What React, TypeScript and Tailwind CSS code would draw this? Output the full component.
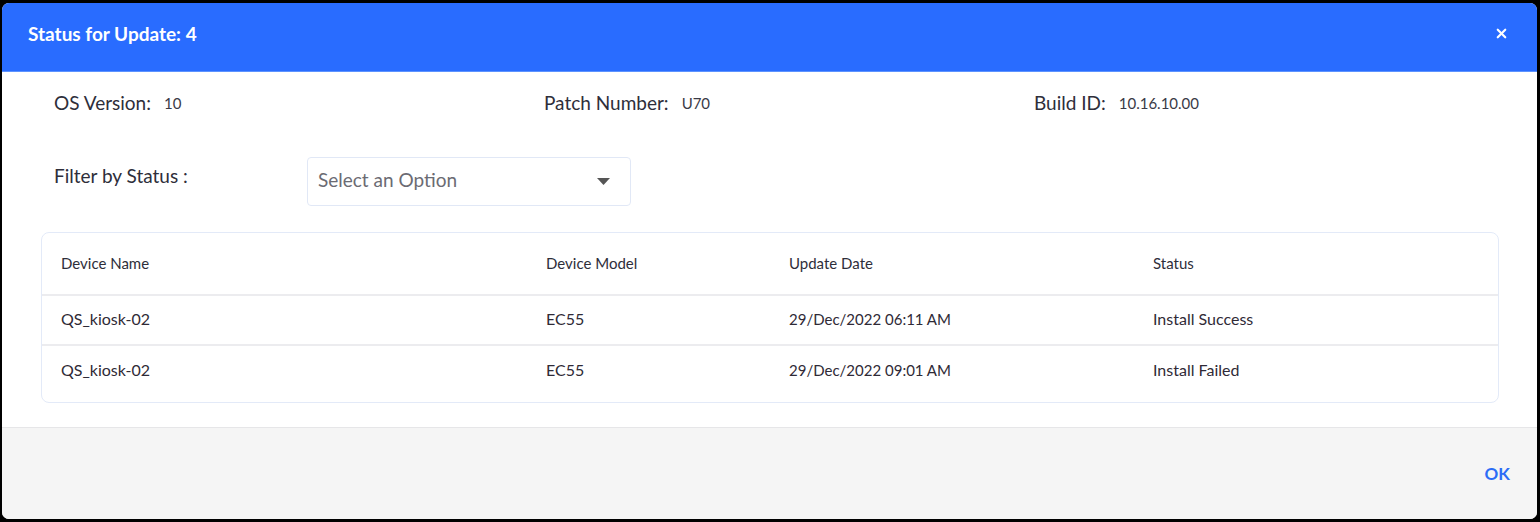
import { X } from "lucide-react";

type Row = { name: string; model: string; date: string; status: string };

const rows: Row[] = [
  { name: "QS_kiosk-02", model: "EC55", date: "29/Dec/2022 06:11 AM", status: "Install Success" },
  { name: "QS_kiosk-02", model: "EC55", date: "29/Dec/2022 09:01 AM", status: "Install Failed" },
];

const cols = "grid grid-cols-[485px_243px_364px_1fr] pl-[19px] pr-[20px]";

function Info({ label, value }: { label: string; value: string }) {
  return (
    <div className="flex items-center">
      <span className="text-[19px] text-[#2e2e3a]">{label}</span>
      <span className="ml-[13px] text-[15px] text-[#3a3a46]">{value}</span>
    </div>
  );
}

export default function App() {
  return (
    <div
      className="h-[522px] w-[1540px] bg-black pl-[2px] pt-[3px]"
      style={{ fontFamily: "Lato, 'Noto Sans', sans-serif" }}
    >
      <div className="flex h-[516px] w-[1535px] flex-col overflow-hidden rounded-[7px] bg-white">
        {/* header */}
        <div className="flex h-[69px] shrink-0 items-center justify-between border-b border-[#5d93ff] bg-[#296cff] pb-[5px] pl-[26px] pr-[28px]">
          <h2 className="text-[19px] font-bold text-white">Status for Update: 4</h2>
          <X className="mb-[3px] h-[15px] w-[15px] text-white" strokeWidth={3.5} />
        </div>

        {/* body */}
        <div className="flex-1 pl-[39px] pr-[38px] pt-[17px]">
          <div className="grid h-[22px] grid-cols-[490px_490px_1fr] pl-[13px]">
            <Info label="OS Version:" value="10" />
            <Info label="Patch Number:" value="U70" />
            <Info label="Build ID:" value="10.16.10.00" />
          </div>

          <div className="mt-[46px] flex items-start pl-[13px]">
            <span className="mt-[8px] w-[253px] text-[19px] leading-[22px] text-[#2e2e3a]">
              Filter by Status :
            </span>
            <div className="flex h-[49px] w-[324px] items-center justify-between rounded-[4px] border border-[#e1e8f6] pb-[3px] pl-[10px] pr-[20px]">
              <span className="text-[19px] text-[#6b6b73]">Select an Option</span>
              <svg width="13" height="7" viewBox="0 0 13 7" className="mt-[2px]">
                <path d="M0 0 H13 L6.5 7 Z" fill="#555" />
              </svg>
            </div>
          </div>

          <div className="mt-[26px] h-[171px] rounded-[8px] border border-[#e3eaf8]">
            <div className={`${cols} h-[63px] items-center border-b-2 border-[#ececef] text-[15px] text-[#2e2e3a]`}>
              <span>Device Name</span>
              <span>Device Model</span>
              <span>Update Date</span>
              <span>Status</span>
            </div>
            {rows.map((r, i) => (
              <div
                key={i}
                className={`${cols} h-[50px] items-center pb-[2px] text-[16px] text-[#2f2a36] ${
                  i < rows.length - 1 ? "border-b-2 border-[#ececef]" : ""
                }`}
              >
                <span>{r.name}</span>
                <span>{r.model}</span>
                <span className="text-[15px]">{r.date}</span>
                <span>{r.status}</span>
              </div>
            ))}
          </div>
        </div>

        {/* footer */}
        <div className="flex h-[92px] shrink-0 items-center justify-end border-t border-[#e6e6e8] bg-[#f5f5f5] pr-[27px]">
          <button className="text-[17px] font-bold text-[#2c6cf6]">OK</button>
        </div>
      </div>
    </div>
  );
}
